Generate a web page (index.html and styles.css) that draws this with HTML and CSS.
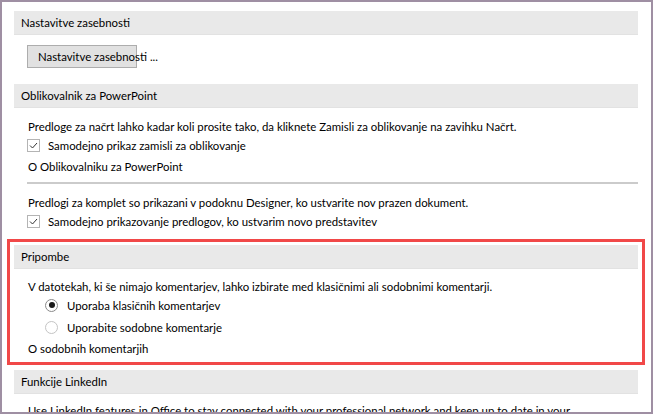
FILE: index.html
```html
<!DOCTYPE html>
<html lang="sl">
<head>
    <meta charset="UTF-8">
    <meta name="viewport" content="width=device-width, initial-scale=1.0">
    <title>Možnosti</title>
    <link rel="stylesheet" href="styles.css">
</head>
<body>
<div class="window">

    <div class="section-head">Nastavitve zasebnosti</div>
    <div class="section-body privacy">
        <button class="btn">Nastavitve zasebnosti ...</button>
    </div>

    <div class="section-head">Oblikovalnik za PowerPoint</div>
    <div class="section-body">
        <p class="line">Predloge za načrt lahko kadar koli prosite tako, da kliknete Zamisli za oblikovanje na zavihku Načrt.</p>
        <label class="check">
            <span class="box"><svg width="13" height="13" viewBox="0 0 13 13"><path d="M3 6.5 L5.5 9 L10 4" fill="none" stroke="#333" stroke-width="1"/></svg></span>
            Samodejno prikaz zamisli za oblikovanje
        </label>
        <p class="line link">O Oblikovalniku za PowerPoint</p>
        <div class="sep"></div>
        <p class="line">Predlogi za komplet so prikazani v podoknu Designer, ko ustvarite nov prazen dokument.</p>
        <label class="check">
            <span class="box"><svg width="13" height="13" viewBox="0 0 13 13"><path d="M3 6.5 L5.5 9 L10 4" fill="none" stroke="#333" stroke-width="1"/></svg></span>
            Samodejno prikazovanje predlogov, ko ustvarim novo predstavitev
        </label>
    </div>

    <!-- označeni razdelek -->
    <div class="highlight">
        <div class="section-head">Pripombe</div>
        <div class="section-body comments">
            <p class="line">V datotekah, ki še nimajo komentarjev, lahko izbirate med klasičnimi ali sodobnimi komentarji.</p>
            <label class="radio"><span class="dot on"></span>Uporaba klasičnih komentarjev</label>
            <label class="radio"><span class="dot"></span>Uporabite sodobne komentarje</label>
            <p class="line link">O sodobnih komentarjih</p>
        </div>
    </div>

    <div class="section-head linkedin">Funkcije LinkedIn</div>
    <div class="section-body">
        <p class="line">Use LinkedIn features in Office to stay connected with your professional network and keep up to date in your</p>
    </div>

</div>
</body>
</html>
```
FILE: styles.css
```css
html, body {
    margin: 0;
    padding: 0;
    background: #fff;
}

body {
    font-family: Lato, "Liberation Sans", sans-serif;
    font-size: 11.4px;
    color: #000;
}

.window {
    box-sizing: border-box;
    width: 653px;
    height: 414px;
    border: 2px solid #9f8fa3;
    padding: 9px 13px 0 12px;
    overflow: hidden;
}

.section-head {
    height: 23px;
    line-height: 23px;
    padding-left: 7px;
    background: #e9e9e9;
    border-bottom: 1px solid #e2e2e2;
    white-space: nowrap;
}

.section-body {
    padding-left: 14px;
}

.privacy {
    padding: 10px 0 16px 13px;
}

.btn {
    display: block;
    box-sizing: border-box;
    width: 110px;
    height: 23px;
    padding: 0 0 0 10px;
    background: #e1e1e1;
    border: 1px solid #adadad;
    font: inherit;
    color: #000;
    text-align: left;
    white-space: nowrap;
    overflow: visible;
}

.line {
    margin: 0;
    line-height: 18px;
    white-space: nowrap;
}

.section-body > .line:first-child {
    margin-top: 10px;
}

.check {
    display: flex;
    align-items: center;
    gap: 8px;
    height: 18px;
    margin-left: -1px;
    white-space: nowrap;
}

.box {
    box-sizing: border-box;
    width: 13px;
    height: 13px;
    border: 1px solid #b4b4b4;
    background: #fff;
    position: relative;
}

.box svg {
    position: absolute;
    left: -1px;
    top: -1px;
}

.link {
    margin-top: 4px;
}

.sep {
    height: 2px;
    background: #cbcbcb;
    margin: 6px 0 10px -1px;
}

.highlight {
    margin: 9px -7px 0;
    border: 3px solid #f14848;
    padding: 3px 4px 4px;
}

.comments > .line:first-child {
    margin-top: 9px;
}

.radio {
    display: flex;
    align-items: center;
    gap: 9px;
    height: 18px;
    margin-left: 17px;
    white-space: nowrap;
}

.radio + .radio {
    margin-top: 4px;
}

.dot {
    box-sizing: border-box;
    width: 13px;
    height: 13px;
    border: 1px solid #c4c4c4;
    border-radius: 50%;
    background: #fff;
    display: flex;
    align-items: center;
    justify-content: center;
}

.dot.on {
    border-color: #8a8a8a;
}

.dot.on::after {
    content: "";
    width: 6px;
    height: 6px;
    border-radius: 50%;
    background: #1a1a1a;
}

.linkedin {
    margin-top: 5px;
}

.linkedin + .section-body > .line:first-child {
    margin-top: 8px;
}
```
